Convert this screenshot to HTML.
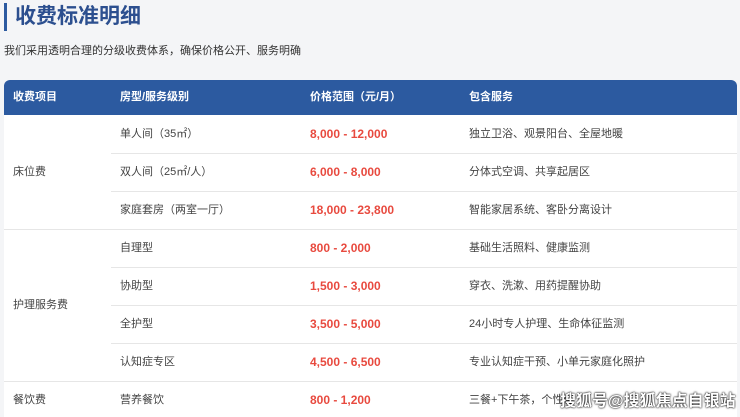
<!DOCTYPE html>
<html><head><meta charset="utf-8"><style>
*{margin:0;padding:0;box-sizing:border-box}
html,body{width:740px;height:417px;overflow:hidden}
body{background:#f4f5f7;font-family:"Liberation Sans","Noto Sans CJK SC",sans-serif;position:relative}
.bar{position:absolute;left:4px;top:3px;width:3px;height:28px;background:#2c5aa0}
h1{position:absolute;left:15px;top:4px;font-size:21px;color:#2c4f8f;font-weight:bold;line-height:26px}
.sub{position:absolute;left:4px;top:44px;font-size:11px;color:#333;line-height:14px}
.tbl{position:absolute;left:4px;top:80px;width:733px;height:337px;background:#fff;border-radius:6px 6px 0 0;overflow:hidden}
.hd{height:35px;background:#2c5aa0;color:#fff;font-size:11px;font-weight:bold;position:relative}
.c{position:absolute;line-height:12px;white-space:nowrap}
.hd .c{top:11px}
.row{position:absolute;left:0;right:0;height:38px;font-size:11px;color:#444}
.row .c{top:13px}
.p{color:#e84a3f;font-weight:bold;font-size:12px}
.ln{position:absolute;right:0;height:1px;background:#e6e6e6}
.wm{position:absolute;left:560px;top:392px;font-size:16px;color:#fff;font-weight:bold;text-shadow:0 0 2px #000,0 0 1px #000;white-space:nowrap;line-height:20px}
</style></head><body>
<div class="bar"></div>
<h1>收费标准明细</h1>
<div class="sub">我们采用透明合理的分级收费体系，确保价格公开、服务明确</div>
<div class="tbl">
<div class="hd"><span class="c" style="left:9px">收费项目</span><span class="c" style="left:116px">房型/服务级别</span><span class="c" style="left:306px">价格范围（元/月）</span><span class="c" style="left:465px">包含服务</span></div>
<div class="row" style="top:35px"><span class="c" style="left:116px">单人间（35㎡）</span><span class="c p" style="left:306px">8,000 - 12,000</span><span class="c" style="left:465px">独立卫浴、观景阳台、全屋地暖</span></div>
<div class="ln" style="top:73px;left:107px"></div>
<div class="row" style="top:73px"><span class="c" style="left:9px">床位费</span><span class="c" style="left:116px">双人间（25㎡/人）</span><span class="c p" style="left:306px">6,000 - 8,000</span><span class="c" style="left:465px">分体式空调、共享起居区</span></div>
<div class="ln" style="top:111px;left:107px"></div>
<div class="row" style="top:111px"><span class="c" style="left:116px">家庭套房（两室一厅）</span><span class="c p" style="left:306px">18,000 - 23,800</span><span class="c" style="left:465px">智能家居系统、客卧分离设计</span></div>
<div class="ln" style="top:149px;left:0"></div>
<div class="row" style="top:149px"><span class="c" style="left:116px">自理型</span><span class="c p" style="left:306px">800 - 2,000</span><span class="c" style="left:465px">基础生活照料、健康监测</span></div>
<div class="ln" style="top:187px;left:107px"></div>
<div class="row" style="top:187px"><span class="c" style="left:116px">协助型</span><span class="c p" style="left:306px">1,500 - 3,000</span><span class="c" style="left:465px">穿衣、洗漱、用药提醒协助</span></div>
<div class="row" style="top:206px"><span class="c" style="left:9px">护理服务费</span></div>
<div class="ln" style="top:225px;left:107px"></div>
<div class="row" style="top:225px"><span class="c" style="left:116px">全护型</span><span class="c p" style="left:306px">3,500 - 5,000</span><span class="c" style="left:465px">24小时专人护理、生命体征监测</span></div>
<div class="ln" style="top:263px;left:107px"></div>
<div class="row" style="top:263px"><span class="c" style="left:116px">认知症专区</span><span class="c p" style="left:306px">4,500 - 6,500</span><span class="c" style="left:465px">专业认知症干预、小单元家庭化照护</span></div>
<div class="ln" style="top:301px;left:0"></div>
<div class="row" style="top:301px"><span class="c" style="left:9px">餐饮费</span><span class="c" style="left:116px">营养餐饮</span><span class="c p" style="left:306px">800 - 1,200</span><span class="c" style="left:465px">三餐+下午茶，个性化</span></div>
</div>
<div class="wm">搜狐号@搜狐焦点自银站</div>
</body></html>
